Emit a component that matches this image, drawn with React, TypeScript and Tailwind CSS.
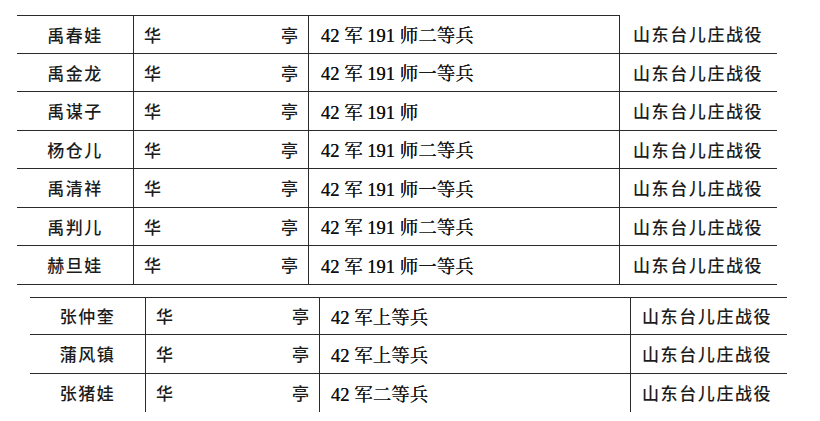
const top = [
  ['禹春娃', '42 军 191 师二等兵'],
  ['禹金龙', '42 军 191 师一等兵'],
  ['禹谋子', '42 军 191 师'],
  ['杨仓儿', '42 军 191 师二等兵'],
  ['禹清祥', '42 军 191 师一等兵'],
  ['禹判儿', '42 军 191 师二等兵'],
  ['赫旦娃', '42 军 191 师一等兵'],
];

const bottom = [
  ['张仲奎', '42 军上等兵'],
  ['蒲风镇', '42 军上等兵'],
  ['张猪娃', '42 军二等兵'],
];

const sans = { fontFamily: '"Noto Sans CJK SC", "Noto Sans", sans-serif' };
const serif = { fontFamily: '"Liberation Serif", "Noto Serif CJK SC", "Noto Sans CJK SC", serif' };

function Row({ name, unit, last, first, variant }: { name: string; unit: string; last: boolean; first: boolean; variant: 'top' | 'bottom' }) {
  const cols =
    variant === 'top'
      ? 'grid-cols-[117px_175px_311px_157px]'
      : 'grid-cols-[116px_174px_311px_156px]';
  const rowBorder = last && variant === 'bottom' ? '' : 'border-b-[1.5px] border-[#2a2a2a]';
  const topBorder = first ? 'border-t-[1.5px] border-t-[#2a2a2a]' : '';
  return (
    <div className={`grid ${cols} h-[38.5px] ${rowBorder}`}>
      <div
        className={`flex items-center justify-center border-r-[1.5px] border-r-[#2a2a2a] ${topBorder} text-[17px] font-medium tracking-[1.5px] text-[#1c1c1c]`}
        style={sans}
      >
        {name}
      </div>
      <div
        className={`flex items-center justify-between border-r-[1.5px] border-r-[#2a2a2a] ${topBorder} pl-[10px] pr-[10px] text-[17px] font-medium text-[#1c1c1c]`}
        style={sans}
      >
        <span>华</span>
        <span>亭</span>
      </div>
      <div
        className={`flex items-center border-r-[1.5px] border-r-[#2a2a2a] ${topBorder} ${variant === 'top' ? 'pl-[12px]' : 'pl-[11px]'} text-[18.5px] leading-none pt-[4px] text-[#111]`}
        style={serif}
      >
        <span className="[text-shadow:0_0_0.4px_#111]">{unit}</span>
      </div>
      <div
        className={`flex items-center ${variant === 'bottom' ? topBorder + ' pl-[11px]' : 'pl-[13px]'} text-[17px] font-medium tracking-[1.6px] text-[#1c1c1c]`}
        style={sans}
      >
        山东台儿庄战役
      </div>
    </div>
  );
}

export default function App() {
  return (
    <div className="w-[820px] h-[421px] bg-white overflow-hidden">
      <div className="ml-[17px] pt-[15px] w-[760px]">
        {top.map((r, i) => (
          <Row key={r[0]} name={r[0]} unit={r[1]} first={i === 0} last={i === top.length - 1} variant="top" />
        ))}
      </div>
      <div className="ml-[30px] mt-[12px] w-[757px]">
        {bottom.map((r, i) => (
          <Row key={r[0]} name={r[0]} unit={r[1]} first={i === 0} last={i === bottom.length - 1} variant="bottom" />
        ))}
      </div>
    </div>
  );
}
